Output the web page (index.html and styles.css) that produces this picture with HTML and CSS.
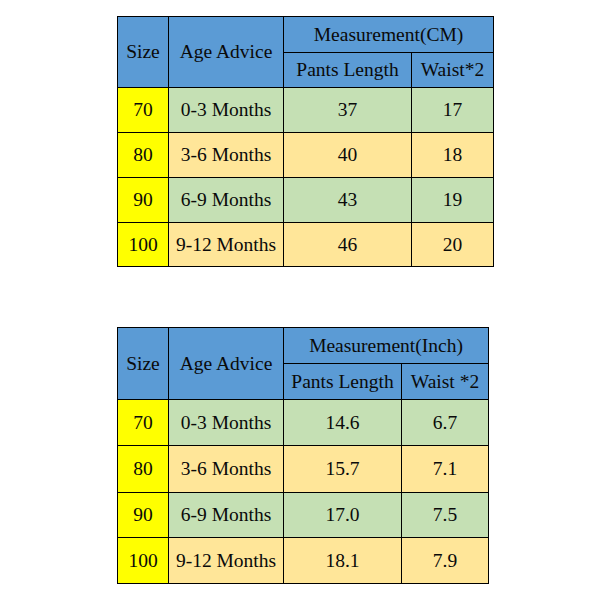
FILE: index.html
```html
<!DOCTYPE html>
<html>
<head>
<meta charset="utf-8">
<link rel="stylesheet" href="styles.css">
</head>
<body>
<div class="page">
  <table class="chart chart-cm">
    <colgroup><col class="c1"><col class="c2"><col class="c3"><col class="c4"></colgroup>
    <tr class="h1"><th rowspan="2" class="hd">Size</th><th rowspan="2" class="hd">Age Advice</th><th colspan="2" class="hd">Measurement(CM)</th></tr>
    <tr class="h2"><th class="hd">Pants Length</th><th class="hd">Waist*2</th></tr>
    <tr class="r1 g"><td class="sz">70</td><td>0-3 Months</td><td>37</td><td>17</td></tr>
    <tr class="r2 o"><td class="sz">80</td><td>3-6 Months</td><td>40</td><td>18</td></tr>
    <tr class="r3 g"><td class="sz">90</td><td>6-9 Months</td><td>43</td><td>19</td></tr>
    <tr class="r4 o"><td class="sz">100</td><td>9-12 Months</td><td>46</td><td>20</td></tr>
  </table>
  <table class="chart chart-in">
    <colgroup><col class="c1"><col class="c2"><col class="c3"><col class="c4"></colgroup>
    <tr class="h1"><th rowspan="2" class="hd">Size</th><th rowspan="2" class="hd">Age Advice</th><th colspan="2" class="hd">Measurement(Inch)</th></tr>
    <tr class="h2"><th class="hd">Pants Length</th><th class="hd">Waist *2</th></tr>
    <tr class="r1 g"><td class="sz">70</td><td>0-3 Months</td><td>14.6</td><td>6.7</td></tr>
    <tr class="r2 o"><td class="sz">80</td><td>3-6 Months</td><td>15.7</td><td>7.1</td></tr>
    <tr class="r3 g"><td class="sz">90</td><td>6-9 Months</td><td>17.0</td><td>7.5</td></tr>
    <tr class="r4 o"><td class="sz">100</td><td>9-12 Months</td><td>18.1</td><td>7.9</td></tr>
  </table>
</div>
</body>
</html>
```
FILE: styles.css
```css
html, body { margin: 0; padding: 0; background: #fff; }
.page {
  display: flex;
  flex-direction: column;
  align-items: flex-start;
  padding: 16px 0 0 117px;
  gap: 60px;
}
.chart {
  border-collapse: collapse;
  table-layout: fixed;
  font-family: "Liberation Serif", "Times New Roman", serif;
  font-size: 19.5px;
  color: #0a0a0a;
  border: 1.5px solid #000;
}
.chart th, .chart td {
  border: 1px solid #000;
  padding: 0;
  text-align: center;
  vertical-align: middle;
  font-weight: normal;
  white-space: nowrap;
}
.chart .hd { background: #5b9bd5; }
.chart .sz { background: #ffff00; }
.chart tr.g td { background: #c5e0b4; }
.chart tr.o td { background: #ffe699; }
.chart tr.g td.sz, .chart tr.o td.sz { background: #ffff00; }

.chart-cm { width: 376px; }
.chart-cm .c1 { width: 51px; }
.chart-cm .c2 { width: 115px; }
.chart-cm .c3 { width: 128px; }
.chart-cm .c4 { width: 82px; }
.chart-cm .h1 { height: 36px; }
.chart-cm .h2 { height: 35px; }
.chart-cm .r1, .chart-cm .r2, .chart-cm .r3 { height: 45px; }
.chart-cm .r4 { height: 44px; }

.chart-in { width: 371px; }
.chart-in .c1 { width: 51px; }
.chart-in .c2 { width: 115px; }
.chart-in .c3 { width: 118px; }
.chart-in .c4 { width: 87px; }
.chart-in .h1 { height: 36px; }
.chart-in .h2 { height: 36px; }
.chart-in .r1 { height: 46px; }
.chart-in .r2 { height: 47px; }
.chart-in .r3 { height: 45px; }
.chart-in .r4 { height: 46px; }
```
